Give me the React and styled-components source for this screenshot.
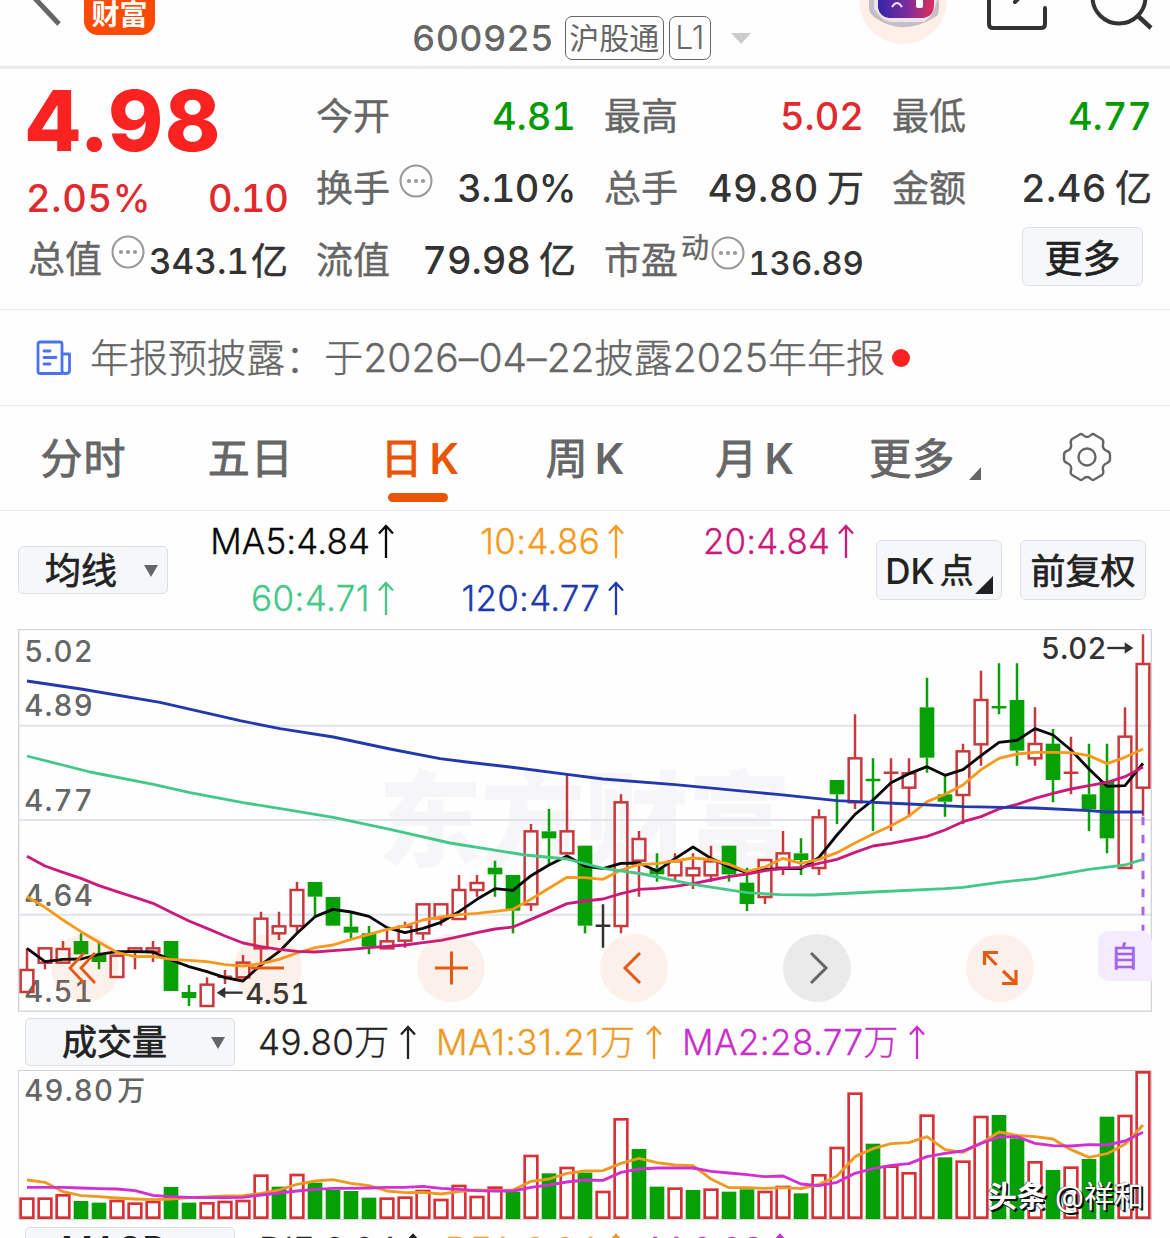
import React from 'react';
import styled, { createGlobalStyle, css } from 'styled-components';

const GlobalStyle = createGlobalStyle`
    * { box-sizing: border-box; }
    body {
        margin: 0;
        background: #fefefe;
        font-family: Inter, "Noto Sans CJK SC", sans-serif;
        color: #333;
    }
`;

const Page = styled.div`
    width: 1170px;
    height: 1238px;
    overflow: hidden;
    display: flex;
    flex-direction: column;
    white-space: nowrap;
`;

const Text = styled.span`
    display: inline-block;
    font-size: ${p => p.$size || 38}px;
    font-weight: ${p => p.$weight || 400};
    color: ${p => p.$color || '#333'};
    letter-spacing: ${p => p.$spacing || 0}px;
    line-height: 1;
    ${p => p.$thick && css`-webkit-text-stroke: ${p.$thick}px currentColor;`}
`;

/* header */
const Header = styled.header`
    height: 69px;
    flex: none;
    display: flex;
    align-items: flex-start;
    border-bottom: 3px solid #ececec;
    overflow: hidden;
`;
const BackIcon = styled.svg`
    width: 35px;
    height: 30px;
    margin-left: 28px;
    flex: none;
`;
const Logo = styled.div`
    width: 71px;
    height: 35px;
    margin-left: 21px;
    padding-top: 1px;
    text-align: center;
    background: #ff4a03;
    border-radius: 0 0 14px 14px;
    flex: none;
`;
const StockCode = styled.div`
    display: flex;
    align-items: center;
    height: 46px;
    margin: 15px 0 0 257px;
    width: 339px;
    font-variant-numeric: tabular-nums;
`;
const Badge = styled.span`
    display: flex;
    align-items: center;
    justify-content: center;
    width: ${p => p.$width}px;
    height: 44px;
    margin-left: ${p => p.$gap}px;
    border: 1.5px solid #666;
    border-radius: 7px;
    font-variant-numeric: normal;
`;
const DownMark = styled.i`
    margin-left: ${p => p.$gap || 0}px;
    border: ${p => p.$half || 7}px solid transparent;
    border-top: ${p => p.$tall || 12}px solid ${p => p.$color || '#666'};
    border-bottom: 0;
`;
const HeaderIcons = styled.svg`
    width: 319px;
    height: 60px;
    margin-left: 100px;
`;

/* quote */
const Quote = styled.section`
    height: 241px;
    flex: none;
    display: grid;
    grid-template-columns: repeat(4, 259px);
    column-gap: 29px;
    padding: 11px 0 0 28px;
    border-bottom: 1px solid #ebebeb;
    font-variant-numeric: tabular-nums;
`;
const QuoteColumn = styled.div`
    display: flex;
    flex-direction: column;
`;
const QuoteRow = styled.div`
    height: ${p => p.$height || 72}px;
    display: flex;
    align-items: center;
    justify-content: space-between;
`;
const BigPrice = styled.div`
    margin-left: -2px;
    font-size: 84px;
    font-weight: 770;
    line-height: 1;
    letter-spacing: 2.8px;
    color: #fb2222;
`;
const Value = styled.span`
    display: flex;
    align-items: center;
    font-size: ${p => p.$size || 38}px;
    font-weight: 500;
    line-height: 1;
    letter-spacing: ${p => p.$spacing || 0}px;
    margin: ${p => p.$drop || 0}px -1px 0 ${p => p.$left || 0}px;
    color: ${p => p.$color || '#333'};
`;
const Unit = styled.span`
    margin-left: ${p => p.$gap || 8}px;
    font-size: 37px;
    font-weight: 400;
    letter-spacing: 0;
    -webkit-text-stroke: 0.5px currentColor;
`;
const Label = styled.span`
    display: flex;
    align-items: center;
    margin-top: ${p => p.$lift || 0}px;
    font-size: 37px;
    line-height: 1;
    color: #666;
    -webkit-text-stroke: 0.4px currentColor;
`;
const InfoIcon = styled.svg`
    width: 34px;
    height: 34px;
    margin: -15px 0 0 ${p => p.$gap}px;
`;
const Sup = styled.span`
    font-size: 28px;
    margin: -24px 0 0 3px;
`;
const MoreButton = styled.button`
    width: 121px;
    height: 59px;
    margin: -8px 8px 0 auto;
    padding: 3px 0 0;
    font: 38px/1 Inter, "Noto Sans CJK SC", sans-serif;
    color: #222;
    -webkit-text-stroke: 0.7px #222;
    background: #f5f7fa;
    border: 1.5px solid #dfe2e6;
    border-radius: 6px;
`;

/* notice */
const Notice = styled.section`
    height: 96px;
    flex: none;
    display: flex;
    align-items: center;
    padding-left: 36px;
    border-bottom: 1px solid #ebebeb;
`;
const NoticeText = styled.div`
    display: flex;
    align-items: center;
    margin-left: 18px;
`;
const RedDot = styled.i`
    width: 18px;
    height: 18px;
    margin-left: 7px;
    border-radius: 50%;
    background: #fb2222;
`;

/* tabs */
const Tabs = styled.nav`
    height: 105px;
    flex: none;
    display: grid;
    grid-template-columns: repeat(7, 1fr);
    border-bottom: 1px solid #ebebeb;
`;
const Tab = styled.div`
    display: flex;
    flex-direction: column;
    align-items: center;
    padding-top: 25px;
    color: ${p => (p.$active ? '#ea5504' : '#666')};
`;
const TabLabel = styled.span`
    display: flex;
    align-items: center;
    height: 55px;
    margin-left: ${p => p.$shift || 0}px;
    font-size: 42px;
    line-height: 1;
    letter-spacing: 1px;
    -webkit-text-stroke: 0.9px currentColor;
`;
const KLetter = styled.b`
    font-weight: 600;
    margin-left: 6px;
    -webkit-text-stroke: 0;
`;
const Underline = styled.i`
    width: 60px;
    height: 9px;
    margin-top: 7px;
    border-radius: 5px;
    background: #ea5504;
`;
const GearIcon = styled.svg`
    width: 50px;
    height: 54px;
    margin: -1px 0 0 2px;
`;
const Corner = styled.i`
    align-self: flex-end;
    margin: 0 ${p => p.$right || 0}px ${p => p.$bottom || 0}px ${p => p.$left || 0}px;
    border-left: ${p => p.$w}px solid transparent;
    border-bottom: ${p => p.$h}px solid ${p => p.$color};
`;

/* indicator bars */
const MaBar = styled.section`
    height: 118px;
    flex: none;
    display: flex;
    align-items: center;
    padding-left: 18px;
`;
const Select = styled.div`
    width: ${p => p.$width}px;
    height: 48px;
    flex: none;
    display: flex;
    align-items: center;
    justify-content: space-between;
    padding: 1px 9px ${p => p.$raise || 0}px ${p => p.$inset}px;
    background: #f5f7fa;
    border: 1.5px solid #dde0e3;
    border-radius: 5px;
`;
const MaGrid = styled.div`
    display: grid;
    grid-template-columns: 226px 230px 230px;
    grid-auto-rows: 57px;
    width: 686px;
    margin-top: -1px;
`;
const Reading = styled.span`
    display: flex;
    align-items: center;
    justify-content: flex-end;
    gap: ${p => p.$gap || 8}px;
    color: ${p => p.$color};
`;
const ChipButton = styled.div`
    width: 126px;
    height: 60px;
    margin-left: ${p => p.$gap}px;
    padding-top: 2px;
    display: flex;
    align-items: center;
    justify-content: center;
    background: #f5f7fa;
    border: 1.5px solid #dde0e3;
    border-radius: 6px;
`;
const ChipWord = styled.span`
    width: 34px;
    margin: 0 1px 0 5px;
    font-size: 34px;
    line-height: 1;
    color: #222;
    -webkit-text-stroke: 0.6px #222;
`;
const VolumeBar = styled.section`
    height: ${p => p.$height}px;
    padding: ${p => p.$top}px 0 0 25px;
    flex: none;
    display: flex;
    align-items: flex-start;
`;
const ReadingSlot = styled.div`
    height: 48px;
    display: flex;
    margin: ${p => p.$lift || 0}px 0 0 ${p => p.$gap}px;
    width: ${p => p.$width}px;
`;

/* charts */
const ChartBox = styled.section`
    position: relative;
    width: 1134px;
    height: ${p => p.$height}px;
    margin-left: 18px;
    flex: none;
    font-variant-numeric: tabular-nums;
`;
const Plot = styled.svg`
    display: block;
    width: 100%;
    height: 100%;
`;
const ScaleLabel = styled.text`
    font-family: Inter, "Noto Sans CJK SC", sans-serif;
    font-weight: 500;
    font-size: ${p => p.$size || 88}px;
    letter-spacing: ${p => (p.$spacing === undefined ? 3.5 : p.$spacing)}px;
    fill: ${p => p.$fill || '#666'};
`;
const Watermark = styled.text`
    font: 900 312px "Noto Sans CJK SC", sans-serif;
    fill: #f6f6f8;
`;
const Controls = styled.div`
    position: absolute;
    left: 33px;
    bottom: 10px;
    display: flex;
    gap: 115px;
`;
const RoundButton = styled.div`
    width: 68px;
    height: 68px;
    border-radius: 50%;
    background: ${p => (p.$muted ? 'rgba(0, 0, 0, 0.08)' : 'rgba(234, 85, 4, 0.08)')};
    color: ${p => (p.$muted ? '#666' : '#e35a14')};
    svg { display: block; }
`;
const SelfTag = styled.div`
    position: absolute;
    right: 0;
    top: 302px;
    width: 54px;
    height: 50px;
    display: flex;
    align-items: center;
    justify-content: center;
    padding: 2px 1px 0 0;
    border-radius: 10px 10px 0 10px;
    background: #f4ebfe;
`;
const Credit = styled.div`
    position: absolute;
    right: 8px;
    bottom: 7px;
    display: flex;
    align-items: center;
    gap: 8px;
    color: #fff;
    font-size: 30px;
    line-height: 34px;
    text-shadow: 2px 2px 0 #111, 1px 1px 0 #111, -1px 0 1px #555;
`;

const RED = '#c9383c';
const GREEN = '#04a004';

// [colour, high, open/close top, open/close bottom, low], three chart units per pixel
const candles = [
    ['r', 985, 1048, 1116, 1116], ['r', 983, 983, 1028, 1048], ['r', 963, 985, 1028, 1028],
    ['g', 940, 963, 1003, 1003], ['g', 965, 1003, 1026, 1048], ['r', 1005, 1005, 1071, 1071],
    ['r', 983, 983, 995, 1048], ['r', 963, 983, 995, 1026], ['g', 963, 963, 1113, 1113],
    ['g', 1095, 1116, 1134, 1158], ['r', 1072, 1092, 1158, 1158], ['r', 1050, 1070, 1070, 1092],
    ['r', 1005, 1026, 1072, 1072], ['r', 875, 894, 985, 1030], ['r', 875, 917, 940, 960],
    ['r', 786, 808, 918, 940], ['g', 786, 786, 830, 890], ['g', 831, 831, 917, 917],
    ['g', 880, 920, 938, 955], ['g', 918, 940, 980, 1003], ['r', 925, 962, 985, 985],
    ['r', 905, 918, 962, 983], ['r', 851, 851, 940, 960], ['r', 851, 851, 895, 917],
    ['r', 765, 808, 897, 897], ['r', 765, 787, 810, 830], ['g', 722, 743, 763, 830],
    ['g', 765, 765, 872, 940], ['r', 612, 632, 853, 873], ['g', 567, 634, 655, 735],
    ['r', 462, 632, 700, 700], ['g', 677, 677, 917, 940], ['k', 853, 917, 917, 983],
    ['r', 523, 545, 918, 940], ['r', 633, 655, 722, 830], ['g', 700, 745, 763, 785],
    ['r', 700, 722, 766, 785], ['r', 700, 743, 766, 807], ['r', 677, 722, 766, 785],
    ['g', 677, 677, 763, 785], ['g', 743, 788, 852, 873], ['r', 718, 718, 831, 852],
    ['r', 633, 698, 743, 765], ['g', 655, 700, 720, 765], ['r', 568, 590, 744, 765],
    ['g', 480, 480, 523, 612], ['r', 283, 413, 547, 567], ['g', 415, 480, 480, 633],
    ['r', 415, 458, 458, 633], ['r', 415, 458, 503, 590], ['g', 173, 262, 413, 458],
    ['g', 465, 523, 545, 590], ['r', 371, 392, 525, 612], ['r', 152, 238, 373, 437],
    ['g', 130, 262, 262, 283], ['g', 130, 240, 392, 437], ['r', 262, 370, 415, 437],
    ['g', 327, 371, 480, 547], ['r', 350, 458, 458, 523], ['g', 371, 523, 568, 633],
    ['g', 371, 483, 655, 700], ['r', 262, 348, 744, 744], ['r', 43, 130, 503, 587],
];

const ma5 = [985, 1025, 1018, 1017, 1003, 995, 995, 996, 1020, 1040, 1055, 1073, 1083, 1035, 995, 940, 890, 868, 876, 889, 923, 938, 925, 907, 875, 838, 806, 811, 767, 735, 708, 738, 746, 730, 729, 753, 716, 681, 715, 740, 758, 748, 746, 746, 712, 645, 583, 540, 488, 461, 440, 466, 449, 407, 367, 361, 326, 345, 390, 447, 499, 497, 430];
const ma10 = [830, 862, 900, 935, 967, 997, 1010, 1009, 1018, 1021, 1025, 1034, 1038, 1031, 1018, 999, 983, 975, 958, 943, 928, 918, 900, 891, 884, 880, 874, 868, 838, 805, 772, 773, 778, 750, 734, 731, 723, 714, 719, 733, 755, 741, 715, 730, 718, 698, 669, 642, 617, 588, 545, 523, 495, 449, 415, 402, 397, 397, 398, 407, 431, 412, 387];
const ma20 = [709, 738, 757, 775, 797, 815, 832, 850, 877, 903, 925, 948, 969, 980, 988, 994, 996, 992, 988, 983, 979, 975, 968, 961, 950, 938, 927, 921, 898, 875, 851, 843, 837, 821, 808, 805, 799, 791, 780, 770, 762, 752, 745, 742, 730, 718, 697, 678, 670, 660, 649, 630, 605, 590, 567, 553, 535, 520, 507, 497, 487, 470, 441];
const ma60 = '81,408 270,456 460,493 570,518 729,548 837,565 1000,592 1170,628 1350,669 1575,705 1701,717 1809,745 1929,762 2025,782 2079,793 2241,818 2340,824 2440,825 2619,816 2835,806 2889,802 2997,787 3105,776 3267,748 3375,735 3429,718';
const ma120 = '81,183 243,207 480,247 720,302 840,326 1000,351 1170,387 1320,416 1400,426 1530,441 1701,463 1809,477 2025,494 2340,524 2511,542 2727,552 2889,560 3105,564 3267,572 3321,576 3429,576';

const volumes = [563, 563, 553, 573, 578, 570, 578, 573, 531, 578, 577, 573, 570, 494, 530, 492, 518, 540, 543, 563, 563, 560, 540, 567, 525, 558, 530, 545, 435, 490, 471, 488, 543, 325, 417, 530, 533, 540, 536, 545, 538, 543, 528, 550, 493, 411, 248, 401, 467, 487, 314, 442, 452, 318, 315, 385, 454, 480, 470, 447, 320, 315, 184];
const fallingDays = [3, 4, 8, 9, 14, 16, 17, 18, 19, 27, 29, 31, 34, 35, 37, 39, 40, 43, 47, 51, 54, 55, 57, 59, 60];
const volMa1 = [510, 517, 545, 557, 560, 564, 567, 569, 567, 563, 561, 558, 557, 550, 540, 523, 513, 509, 520, 527, 543, 548, 547, 552, 545, 540, 542, 540, 514, 507, 490, 483, 482, 460, 445, 458, 465, 467, 507, 533, 533, 535, 533, 536, 523, 498, 440, 416, 401, 398, 380, 419, 427, 400, 366, 376, 380, 387, 419, 442, 431, 403, 345];
const volMa2 = [532, 532, 532, 534, 536, 537, 542, 556, 560, 562, 563, 563, 562, 555, 549, 543, 538, 535, 535, 534, 532, 532, 529, 535, 538, 542, 543, 543, 532, 525, 516, 510, 511, 487, 477, 474, 474, 474, 484, 489, 494, 500, 498, 522, 527, 517, 490, 476, 466, 461, 440, 430, 423, 400, 381, 380, 400, 407, 408, 404, 405, 393, 367];

const xAt = i => 81 + i * 54;
const toPoints = values => values.map((v, i) => `${xAt(i)},${v}`).join(' ');

function Line({ points, color }) {
    return <polyline points={points} fill="none" stroke={color} strokeWidth="8.5" strokeLinejoin="round" />;
}

function Candle({ index, data }) {
    const [kind, high, top, bottom, low] = data;
    const x = xAt(index);
    const color = kind === 'r' ? RED : kind === 'g' ? GREEN : '#333';
    const flat = top === bottom;
    return (
        <g stroke={color} strokeWidth="7.5">
            {flat && <path d={`M${x} ${high}V${low}M${x - 22} ${top}H${x + 22}`} />}
            {!flat && <path d={`M${x} ${high}V${top}M${x} ${bottom}V${low}`} />}
            {!flat && kind === 'r' && <rect x={x - 19} y={top + 2} width="38" height={bottom - top - 2} fill="none" />}
            {!flat && kind === 'g' && <rect x={x - 22} y={top} width="44" height={bottom - top} fill={color} stroke="none" />}
        </g>
    );
}

function Info({ gap }) {
    return (
        <InfoIcon $gap={gap} viewBox="0 0 34 34">
            <circle cx="17" cy="17" r="15.5" fill="none" stroke="#999" strokeWidth="2" />
            <g fill="#999"><circle cx="10" cy="17" r="2.1" /><circle cx="17" cy="17" r="2.1" /><circle cx="24" cy="17" r="2.1" /></g>
        </InfoIcon>
    );
}

function UpArrow() {
    return (
        <svg width="16" height="34" viewBox="0 0 16 34" fill="none" stroke="currentColor" strokeWidth="2.3">
            <path d="M8 34V2M1 9.5L8 2L15 9.5" />
        </svg>
    );
}

function Ma({ color, children, spacing, gap }) {
    return (
        <Reading $color={color} $gap={gap}>
            <Text $size={35} $weight={300} $color={color} $spacing={spacing} $thick={0.3}>{children}</Text>
            <UpArrow />
        </Reading>
    );
}

function PriceChart() {
    return (
        <ChartBox $height={383}>
            <Plot viewBox="54 27 3402 1149">
                <Watermark x="1134" y="716" textLength="1240">东方财富</Watermark>
                <g stroke="#e1e3ea" strokeWidth="6"><path d="M54 317H3456M54 600H3456M54 884H3456" /></g>
                <rect x="56" y="28.5" width="3398" height="1145" fill="none" stroke="#d2d4d8" strokeWidth="4" />
                <ScaleLabel x="73" y="125">5.02</ScaleLabel>
                <ScaleLabel x="73" y="287">4.89</ScaleLabel>
                <ScaleLabel x="73" y="573">4.77</ScaleLabel>
                <ScaleLabel x="73" y="857">4.64</ScaleLabel>
                <ScaleLabel x="73" y="1145">4.51</ScaleLabel>
                {candles.map((c, i) => <Candle key={i} index={i} data={c} />)}
                <path d="M3429 590V932" stroke="#a567e8" strokeWidth="9" strokeDasharray="26 28" />
                <Line points={toPoints(ma5)} color="#080808" />
                <Line points={toPoints(ma10)} color="#f79a1c" />
                <Line points={toPoints(ma20)} color="#cc1a7c" />
                <Line points={ma60} color="#44c888" />
                <Line points={ma120} color="#2139ad" />
                <ScaleLabel x="736" y="1152" $size={87} $spacing={-0.5} $fill="#333">4.51</ScaleLabel>
                <path d="M670 1118H728" stroke="#333" strokeWidth="7" />
                <path d="M650 1118L676 1101V1135Z" fill="#333" />
                <ScaleLabel x="3123" y="117" $size={88} $spacing={0.5} $fill="#333">5.02</ScaleLabel>
                <path d="M3322 84H3380" stroke="#333" strokeWidth="7" />
                <path d="M3400 84L3374 67V101Z" fill="#333" />
            </Plot>
            <Controls>
                <RoundButton>
                    <svg viewBox="0 0 68 68" fill="none" stroke="currentColor" strokeWidth="2.8"><path d="M33 19L19 34L33 49M44 19L30 34L44 49" /></svg>
                </RoundButton>
                <RoundButton>
                    <svg viewBox="0 0 68 68" fill="none" stroke="currentColor" strokeWidth="3"><path d="M17 34H50" /></svg>
                </RoundButton>
                <RoundButton>
                    <svg viewBox="0 0 68 68" fill="none" stroke="currentColor" strokeWidth="3"><path d="M18 34H51M34.5 17.5V50.5" /></svg>
                </RoundButton>
                <RoundButton>
                    <svg viewBox="0 0 68 68" fill="none" stroke="currentColor" strokeWidth="3"><path d="M40 19L25 34L40 49" /></svg>
                </RoundButton>
                <RoundButton $muted>
                    <svg viewBox="0 0 68 68" fill="none" stroke="currentColor" strokeWidth="3"><path d="M28 19L43 34L28 49" /></svg>
                </RoundButton>
                <RoundButton>
                    <svg viewBox="0 0 68 68" fill="none" stroke="currentColor" strokeWidth="3.2"><path d="M18.5 31V18.5H32M19 19L30.5 31M37 37L49.5 49M36 49.5H50V36" /></svg>
                </RoundButton>
            </Controls>
            <SelfTag><Text $size={28} $color="#a163ee" $thick={0.6}>自</Text></SelfTag>
        </ChartBox>
    );
}

function VolumeChart() {
    return (
        <ChartBox $height={150}>
            <Plot viewBox="54 180 3402 450">
                <path d="M55 630V181.5H3454V630" fill="none" stroke="#ccd0d4" strokeWidth="3" />
                <path d="M54 629H3456" stroke="#ccd0d4" strokeWidth="3" />
                {volumes.map((top, i) => (
                    fallingDays.includes(i)
                        ? <rect key={i} x={xAt(i) - 22} y={top} width="44" height={627 - top} fill={GREEN} />
                        : <rect key={i} x={xAt(i) - 19} y={top + 3} width="38" height={620 - top} fill="none" stroke="#d93236" strokeWidth="8" />
                ))}
                <Line points={toPoints(volMa1)} color="#ee9a22" />
                <Line points={toPoints(volMa2)} color="#d130d1" />
                <ScaleLabel x="73" y="272">49.80</ScaleLabel>
                <ScaleLabel x="352" y="273" $size={84}>万</ScaleLabel>
            </Plot>
            <Credit><b>头条</b><span>@祥和</span></Credit>
        </ChartBox>
    );
}

function App() {
    return (
        <Page>
            <GlobalStyle />
            <Header>
                <BackIcon viewBox="28 0 35 30"><path d="M59 24L28 -9" stroke="#666" strokeWidth="5" /></BackIcon>
                <Logo><Text $size={28} $weight={700} $color="#fff">财富</Text></Logo>
                <StockCode>
                    <Text $size={36} $weight={500} $color="#666" $spacing={0.3}>600925</Text>
                    <Badge $width={99} $gap={11}><Text $size={30} $color="#666">沪股通</Text></Badge>
                    <Badge $width={42} $gap={5}><Text $size={32} $weight={300} $color="#666">L1</Text></Badge>
                    <DownMark $gap={20} $half={10} $tall={11} $color="#ccc" />
                </StockCode>
                <HeaderIcons viewBox="851 0 319 60" fill="none">
                    <defs>
                        <linearGradient id="visor"><stop offset="0" stopColor="#3525a8" /><stop offset="0.5" stopColor="#7a2ca0" /><stop offset="1" stopColor="#dc2d58" /></linearGradient>
                    </defs>
                    <circle cx="903" cy="0" r="44" fill="#ffefe8" />
                    <path d="M869 6Q868 14 877 19Q902 35 930 20L938 15Q940 8 938 -4H869Z" fill="#c3c0c3" />
                    <path d="M874 -4V8Q880 20 890 22H924Q934 16 937 0Z" fill="#eee3ec" />
                    <path d="M878 -4V8Q880 17 889 18H924Q934 16 934 5V-4Z" fill="url(#visor)" />
                    <path d="M892 7Q897 -1 902 7" stroke="#eae2ff" strokeWidth="2" />
                    <rect x="916" y="-6" width="7" height="14" rx="2" fill="#fff" />
                    <path d="M989 -4V24Q989 28 993 28H1041Q1045 28 1045 24V8" stroke="#333" strokeWidth="4" strokeLinecap="round" />
                    <path d="M1015 2L1020 -3" stroke="#333" strokeWidth="4" strokeLinecap="round" />
                    <circle cx="1119" cy="-3" r="26.5" stroke="#333" strokeWidth="4" />
                    <path d="M1138 16L1151 28" stroke="#333" strokeWidth="4.5" />
                </HeaderIcons>
            </Header>

            <Quote>
                <QuoteColumn>
                    <QuoteRow $height={82}><BigPrice>4.98</BigPrice></QuoteRow>
                    <QuoteRow>
                        <Value $color="#e02a2e" $left={-2} $spacing={0.7}>2.05%</Value>
                        <Value $color="#e02a2e" $spacing={-1}>0.10</Value>
                    </QuoteRow>
                    <QuoteRow $height={54}>
                        <Label $lift={-3}>总值<Info gap={9} /></Label>
                        <Value $size={35}>343.1<Unit $gap={2}>亿</Unit></Value>
                    </QuoteRow>
                </QuoteColumn>
                <QuoteColumn>
                    <QuoteRow><Label>今开</Label><Value $color="#049a04">4.81</Value></QuoteRow>
                    <QuoteRow><Label>换手<Info gap={9} /></Label><Value $spacing={-0.6}>3.10%</Value></QuoteRow>
                    <QuoteRow><Label>流值</Label><Value>79.98<Unit>亿</Unit></Value></QuoteRow>
                </QuoteColumn>
                <QuoteColumn>
                    <QuoteRow><Label>最高</Label><Value $color="#e02a2e">5.02</Value></QuoteRow>
                    <QuoteRow><Label>总手</Label><Value $spacing={0.5}>49.80<Unit>万</Unit></Value></QuoteRow>
                    <QuoteRow><Label>市盈<Sup>动</Sup><Info gap={2} /></Label><Value $size={33} $drop={7}>136.89</Value></QuoteRow>
                </QuoteColumn>
                <QuoteColumn>
                    <QuoteRow><Label>最低</Label><Value $color="#049a04">4.77</Value></QuoteRow>
                    <QuoteRow><Label>金额</Label><Value $spacing={0.5}>2.46<Unit>亿</Unit></Value></QuoteRow>
                    <QuoteRow><MoreButton>更多</MoreButton></QuoteRow>
                </QuoteColumn>
            </Quote>

            <Notice>
                <svg width="36" height="36" viewBox="0 0 36 36" fill="none" stroke="#4a72ee" strokeWidth="2.8" strokeLinejoin="round" strokeLinecap="round">
                    <path d="M26 33.5H4Q2 33.5 2 31.5V4Q2 2 4 2H24Q26 2 26 4V31Q26 33.5 29.5 33.5Q33.5 33.5 33.5 31V14H26M8 11H14M8 17.5H20M8 24H14" />
                </svg>
                <NoticeText>
                    <Text $size={39} $weight={300} $color="#666" $spacing={0.04} $thick={0.35}>年报预披露：于2026–04–22披露2025年年报</Text>
                </NoticeText>
                <RedDot />
            </Notice>

            <Tabs>
                <Tab><TabLabel>分时</TabLabel></Tab>
                <Tab><TabLabel>五日</TabLabel></Tab>
                <Tab $active><TabLabel $shift={5}>日<KLetter>K</KLetter></TabLabel><Underline /></Tab>
                <Tab><TabLabel $shift={1}>周<KLetter>K</KLetter></TabLabel></Tab>
                <Tab><TabLabel $shift={6}>月<KLetter>K</KLetter></TabLabel></Tab>
                <Tab>
                    <TabLabel $shift={12}>更多<Corner $w={12} $h={13} $left={14} $bottom={6} $color="#666" /></TabLabel>
                </Tab>
                <Tab>
                    <GearIcon viewBox="0 0 50 54" fill="none" stroke="#666" strokeWidth="2.4" strokeLinejoin="round">
                        <circle cx="25" cy="27" r="8.5" />
                        <path d="M17 5Q19 3 21 5Q25 9 29 5Q31 3 33 5L40 9Q42 11 41 14Q40 19 45 21Q48 22 48 25V29Q48 32 45 33Q40 35 41 40Q42 43 40 45L33 49Q31 51 29 49Q25 45 21 49Q19 51 17 49L10 45Q8 43 9 40Q10 35 5 33Q2 32 2 29V25Q2 22 5 21Q10 19 9 14Q8 11 10 9Z" />
                    </GearIcon>
                </Tab>
            </Tabs>

            <MaBar>
                <Select $width={150} $inset={26}>
                    <Text $size={36} $color="#222" $thick={0.7}>均线</Text>
                    <DownMark />
                </Select>
                <MaGrid>
                    <Ma color="#080808" spacing={0.1}>MA5:4.84</Ma>
                    <Ma color="#f79a1c" spacing={0.3}>10:4.86</Ma>
                    <Ma color="#cc1a7c" spacing={0.1}>20:4.84</Ma>
                    <Ma color="#44c888" spacing={0.4}>60:4.71</Ma>
                    <Ma color="#2139ad" spacing={0.2}>120:4.77</Ma>
                </MaGrid>
                <ChipButton $gap={22}>
                    <Text $size={35} $weight={550} $color="#222">DK</Text>
                    <ChipWord>点</ChipWord>
                    <Corner $w={18} $h={18} $bottom={5} $color="#222" />
                </ChipButton>
                <ChipButton $gap={18}><Text $size={35} $color="#222" $thick={0.7}>前复权</Text></ChipButton>
            </MaBar>

            <PriceChart />

            <VolumeBar $height={58} $top={6}>
                <Select $width={210} $inset={36}>
                    <Text $size={35} $color="#222" $thick={0.7}>成交量</Text>
                    <DownMark />
                </Select>
                <ReadingSlot $gap={23} $width={178}><Ma color="#222" gap={10} spacing={0.4}>49.80万</Ma></ReadingSlot>
                <ReadingSlot $gap={0} $width={246}><Ma color="#ee9a22" gap={10} spacing={0.7}>MA1:31.21万</Ma></ReadingSlot>
                <ReadingSlot $gap={0} $width={260}><Ma color="#c92fcb" gap={10} spacing={0.4}>MA2:28.77万</Ma></ReadingSlot>
            </VolumeBar>

            <VolumeChart />

            <VolumeBar $height={56} $top={7}>
                <Select $width={210} $inset={35} $raise={4}>
                    <Text $size={35} $weight={500} $color="#222">MACD</Text>
                    <DownMark />
                </Select>
                <ReadingSlot $gap={24} $lift={-1} $width={186}><Ma color="#222">DIF:0.04</Ma></ReadingSlot>
                <ReadingSlot $gap={0} $lift={-1} $width={205}><Ma color="#ee9a22" gap={10}>DEA:0.04</Ma></ReadingSlot>
                <ReadingSlot $gap={0} $lift={-1} $width={200}><Ma color="#c92fcb">M:0.02</Ma></ReadingSlot>
            </VolumeBar>
        </Page>
    );
}

export default App;
